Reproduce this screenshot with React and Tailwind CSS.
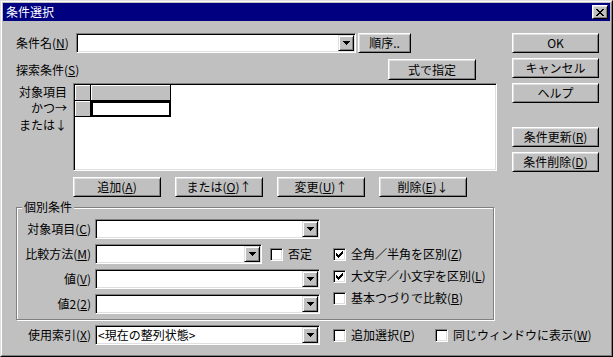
import React from "react";

const raised =
  "border border-t-white border-l-white border-r-black border-b-black shadow-[inset_1px_1px_0_#dfdfdf,inset_-1px_-1px_0_#808080]";
const sunken =
  "border border-t-[#808080] border-l-[#808080] border-r-white border-b-white shadow-[inset_1px_1px_0_#000,inset_-1px_-1px_0_#dfdfdf]";
const scrollBtn =
  "border border-t-[#dfdfdf] border-l-[#dfdfdf] border-r-black border-b-black shadow-[inset_1px_1px_0_#fff,inset_-1px_-1px_0_#808080]";

function U({ children }) {
  return <span className="underline underline-offset-[1px]">{children}</span>;
}

function Btn({ children, className = "" }) {
  return (
    <div
      className={`${raised} bg-[#c0c0c0] flex items-center justify-center h-[20px] leading-[14px] whitespace-nowrap shrink-0 ${className}`}
    >
      {children}
    </div>
  );
}

function Arrow() {
  return (
    <svg width="7" height="4" viewBox="0 0 7 4" shapeRendering="crispEdges">
      <path d="M0 0h7v1h-7z M1 1h5v1h-5z M2 2h3v1h-3z M3 3h1v1h-1z" fill="#000" />
    </svg>
  );
}

function Combo({ className = "", text = "" }) {
  return (
    <div className={`${sunken} bg-white h-[20px] flex items-center shrink-0 ${className}`}>
      <span className="flex-1 pl-[2px] whitespace-nowrap leading-[16px]">{text}</span>
      <div className={`${scrollBtn} bg-[#c0c0c0] w-[16px] h-[16px] mr-[1px] flex items-center justify-center shrink-0`}>
        <Arrow />
      </div>
    </div>
  );
}

function CheckMark() {
  return (
    <svg width="7" height="7" viewBox="0 0 7 7" shapeRendering="crispEdges">
      <path
        d="M6 0h1v1h-1z M5 1h2v1h-2z M0 2h1v1h-1z M4 2h3v1h-3z M0 3h2v1h-2z M3 3h3v1h-3z M0 4h5v1h-5z M1 5h3v1h-3z M2 6h1v1h-1z"
        fill="#000"
      />
    </svg>
  );
}

function Check({ checked, children, className = "" }) {
  return (
    <div className={`flex items-center h-[20px] shrink-0 ${className}`}>
      <div className={`${sunken} bg-white w-[13px] h-[13px] flex items-center justify-center shrink-0`}>
        {checked && <CheckMark />}
      </div>
      <span className="ml-[5px] whitespace-nowrap leading-[14px]">{children}</span>
    </div>
  );
}

function Label({ children, className = "" }) {
  return (
    <div className={`flex justify-end shrink-0 whitespace-nowrap ${className}`}>
      <span>{children}</span>
    </div>
  );
}

function CloseGlyph() {
  return (
    <svg width="8" height="7" viewBox="0 0 8 7" shapeRendering="crispEdges">
      <path
        d="M0 0h2v1h-2z M6 0h2v1h-2z M1 1h2v1h-2z M5 1h2v1h-2z M2 2h4v1h-4z M3 3h2v1h-2z M2 4h4v1h-4z M1 5h2v1h-2z M5 5h2v1h-2z M0 6h2v1h-2z M6 6h2v1h-2z"
        fill="#000"
      />
    </svg>
  );
}

export default function App() {
  return (
    <div className="w-[613px] h-[357px] overflow-hidden bg-[#c0c0c0] border border-t-[#dfdfdf] border-l-[#dfdfdf] border-r-black border-b-black font-['Noto_Sans_CJK_JP','Noto_Sans',sans-serif] text-[12px] leading-[14px] text-black">
      <div className="h-full border border-t-white border-l-white border-r-[#808080] border-b-[#808080] p-px flex flex-col">
        {/* Title bar */}
        <div className="h-[18px] bg-[#000080] flex items-center pl-[3px] pr-[2px] text-white shrink-0">
          <span className="leading-[14px]">条件選択</span>
          <div className={`${raised} ml-auto bg-[#c0c0c0] w-[16px] h-[14px] flex items-center justify-center`}>
            <CloseGlyph />
          </div>
        </div>

        {/* Body */}
        <div className="flex pl-[13px] pt-[12px]">
          {/* Left column */}
          <div className="w-[481px] shrink-0 flex flex-col">
            {/* Row: 条件名 */}
            <div className="flex items-center h-[20px]">
              <div className="w-[60px] shrink-0 whitespace-nowrap">
                条件名(<U>N</U>)
              </div>
              <Combo className="w-[280px]" />
              <Btn className="w-[53px] ml-[2px]">順序..</Btn>
            </div>

            {/* Row: 探索条件 */}
            <div className="flex items-center h-[21px] mt-[6px]">
              <div className="flex-1 whitespace-nowrap">
                探索条件(<U>S</U>)
              </div>
              <Btn className="w-[88px] h-[21px] mr-[21px]">式で指定</Btn>
            </div>

            {/* Grid */}
            <div className="flex mt-[3px] h-[88px]">
              <div className="w-[51px] shrink-0 flex flex-col items-end pt-[1px]">
                <div className="leading-[16px] h-[16px] whitespace-nowrap">対象項目</div>
                <div className="leading-[16px] h-[16px] whitespace-nowrap">かつ→</div>
                <div className="leading-[17px] h-[17px] whitespace-nowrap">または↓</div>
              </div>
              <div className={`${sunken} ml-[6px] w-[424px] h-[88px] shrink-0 bg-white p-px`}>
                <div className="flex">
                  <div className="w-[16px] h-[16px] bg-[#c0c0c0] border-r border-b border-black shadow-[inset_1px_1px_0_#fff]" />
                  <div className="w-[80px] h-[16px] bg-[#c0c0c0] border-r border-b border-black shadow-[inset_1px_1px_0_#fff]" />
                </div>
                <div className="flex">
                  <div className="w-[16px] h-[16px] bg-[#c0c0c0] border-r border-b border-black shadow-[inset_1px_1px_0_#fff]" />
                  <div className="w-[80px] h-[16px] bg-white border-2 border-black" />
                </div>
              </div>
            </div>

            {/* Buttons row */}
            <div className="flex mt-[6px] pl-[57px] gap-[14px]">
              <Btn className="w-[88px]">
                追加(<U>A</U>)
              </Btn>
              <Btn className="w-[88px]">
                または(<U>O</U>)↑
              </Btn>
              <Btn className="w-[88px]">
                変更(<U>U</U>)↑
              </Btn>
              <Btn className="w-[88px]">
                削除(<U>E</U>)↓
              </Btn>
            </div>

            {/* Group box */}
            <div className="relative mt-[10px] w-[478px] h-[113px] border border-[#808080] shadow-[inset_1px_1px_0_#fff,1px_1px_0_#fff]">
              <div className="absolute left-[5px] top-[-8px] bg-[#c0c0c0] px-[2px] leading-[14px]">個別条件</div>
              <div className="flex pt-[11px]">
                <div className="flex flex-col gap-[5px] w-[303px] shrink-0">
                  <div className="flex items-center">
                    <Label className="w-[74px]">
                      対象項目(<U>C</U>)
                    </Label>
                    <Combo className="ml-[4px] w-[225px]" />
                  </div>
                  <div className="flex items-center">
                    <Label className="w-[74px]">
                      比較方法(<U>M</U>)
                    </Label>
                    <Combo className="ml-[4px] w-[167px]" />
                    <Check className="ml-[8px]">否定</Check>
                  </div>
                  <div className="flex items-center">
                    <Label className="w-[74px]">
                      値(<U>V</U>)
                    </Label>
                    <Combo className="ml-[4px] w-[225px]" />
                  </div>
                  <div className="flex items-center">
                    <Label className="w-[74px]">
                      値2(<U>2</U>)
                    </Label>
                    <Combo className="ml-[4px] w-[225px]" />
                  </div>
                </div>
                <div className="flex flex-col gap-[2px] pt-[25px] ml-[13px] shrink-0">
                  <Check checked>
                    全角／半角を区別(<U>Z</U>)
                  </Check>
                  <Check checked>
                    大文字／小文字を区別(<U>L</U>)
                  </Check>
                  <Check>
                    基本つづりで比較(<U>B</U>)
                  </Check>
                </div>
              </div>
            </div>

            {/* Bottom row */}
            <div className="flex items-center mt-[5px]">
              <Label className="w-[75px]">
                使用索引(<U>X</U>)
              </Label>
              <Combo className="ml-[4px] w-[225px]" text="<現在の整列状態>" />
              <Check className="ml-[13px] w-[102px]">
                追加選択(<U>P</U>)
              </Check>
              <Check>
                同じウィンドウに表示(<U>W</U>)
              </Check>
            </div>
          </div>

          {/* Right column */}
          <div className="ml-[15px] w-[87px] shrink-0 flex flex-col">
            <Btn>OK</Btn>
            <Btn className="mt-[5px]">キャンセル</Btn>
            <Btn className="mt-[5px]">ヘルプ</Btn>
            <Btn className="mt-[24px]">
              条件更新(<U>R</U>)
            </Btn>
            <Btn className="mt-[5px]">
              条件削除(<U>D</U>)
            </Btn>
          </div>
        </div>
      </div>
    </div>
  );
}
